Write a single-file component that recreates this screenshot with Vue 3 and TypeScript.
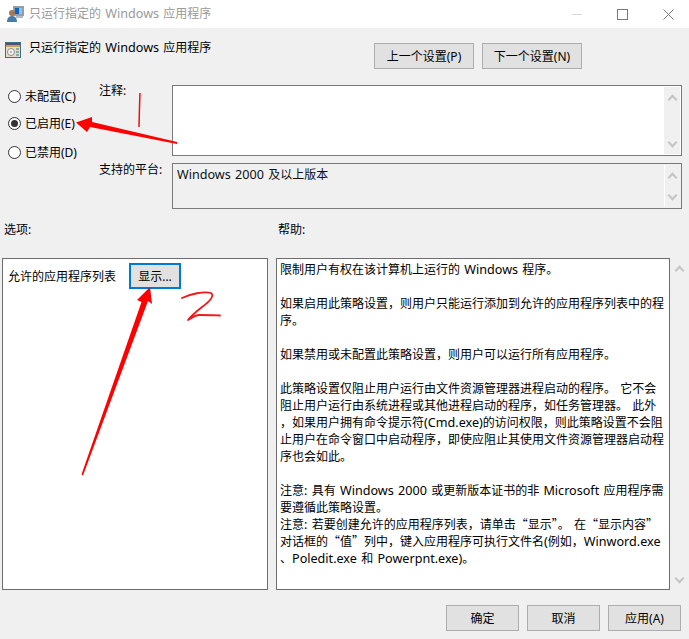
<script setup lang="ts">
interface Seg { text: string; kind: 'lat' | 'cjk' }

function segs(text: string): Seg[] {
  const parts = text.match(/[A-Za-z0-9.:() \-]+|[^A-Za-z0-9.:() \-]+/g) ?? []
  return parts.map((p) => ({ text: p, kind: /^[A-Za-z0-9.:() \-]/.test(p) ? 'lat' : 'cjk' }))
}

const windowTitle = segs('只运行指定的 Windows 应用程序')
const platform = segs('Windows 2000 及以上版本')

const radios = [
  { label: '未配置(C)', checked: false },
  { label: '已启用(E)', checked: true },
  { label: '已禁用(D)', checked: false },
]
const helpLines: Seg[][] = [
  '限制用户有权在该计算机上运行的 Windows 程序。',
  '',
  '如果启用此策略设置，则用户只能运行添加到允许的应用程序列表中的程',
  '序。',
  '',
  '如果禁用或未配置此策略设置，则用户可以运行所有应用程序。',
  '',
  '此策略设置仅阻止用户运行由文件资源管理器进程启动的程序。 它不会',
  '阻止用户运行由系统进程或其他进程启动的程序，如任务管理器。 此外',
  '，如果用户拥有命令提示符(Cmd.exe)的访问权限，则此策略设置不会阻',
  '止用户在命令窗口中启动程序，即使应阻止其使用文件资源管理器启动程',
  '序也会如此。',
  '',
  '注意: 具有 Windows 2000 或更新版本证书的非 Microsoft 应用程序需',
  '要遵循此策略设置。',
  '注意: 若要创建允许的应用程序列表，请单击“显示”。 在“显示内容”',
  '对话框的“值”列中，键入应用程序可执行文件名(例如，Winword.exe',
  '、Poledit.exe 和 Powerpnt.exe)。',
].map(segs)
</script>

<template>
  <div class="window">
    <header class="titlebar">
      <svg class="title-icon" viewBox="0 0 17 16" width="17" height="16">
        <rect x="6.500" y="0.500" width="10" height="9" fill="#8f9aa6" stroke="#9aa0a6" />
        <rect x="8" y="2" width="7" height="6" fill="#0f5fc4" />
        <rect x="12" y="2" width="3" height="6" fill="#8cc4f2" />
        <rect x="9" y="10" width="7" height="2" fill="#b4bac0" />
        <circle cx="5" cy="7" r="3" fill="#a5764f" />
        <path d="M0 16c0-4 2-6 5-6s5 2 5 6z" fill="#4a7aa8" />
      </svg>
      <span class="title-text">
        <span v-for="(s, i) in windowTitle" :key="i" :class="s.kind">{{ s.text }}</span>
      </span>
      <div class="window-controls">
        <span class="ctl-min"></span>
        <span class="ctl-max"></span>
        <svg class="ctl-close" viewBox="0 0 11 11" width="11" height="11">
          <path d="M0.500 0.500L10.500 10.500M10.500 0.500L0.500 10.500" stroke="#7a7a7a" stroke-width="1" fill="none" />
        </svg>
      </div>
    </header>

    <main class="body">
      <section class="head">
        <div class="head-title">
          <svg class="policy-icon" viewBox="0 0 16 16" width="16" height="16">
            <rect x="0.500" y="0.500" width="15" height="15" fill="#e4dfc8" stroke="#3f7278" />
            <rect x="1" y="1" width="14" height="2" fill="#5a4a86" />
            <rect x="1" y="3" width="14" height="2" fill="#c2a850" />
            <circle cx="6" cy="10" r="3.500" fill="#f7f7f7" stroke="#8a8a8a" />
            <circle cx="6" cy="10" r="1" fill="#9a9a9a" />
            <path d="M11 7h3M11 10h3M11 13h3" stroke="#3f7278" stroke-width="1" />
          </svg>
          <span class="head-text">
            <span v-for="(s, i) in windowTitle" :key="i" :class="s.kind">{{ s.text }}</span>
          </span>
        </div>
        <div class="nav-buttons">
          <button class="btn btn-nav">上一个设置(P)</button>
          <button class="btn btn-nav">下一个设置(N)</button>
        </div>
      </section>

      <section class="config">
        <div class="radios">
          <label v-for="r in radios" :key="r.label" class="radio">
            <span class="radio-dot" :class="{ checked: r.checked }"></span>
            <span>{{ r.label }}</span>
          </label>
        </div>
        <div class="fields">
          <div class="field field-note">
            <span class="field-label">注释:</span>
            <div class="box box-note">
              <div class="box-text"></div>
              <div class="scroll">
                <span class="chev up"></span>
                <span class="chev down"></span>
              </div>
            </div>
          </div>
          <div class="field field-platform">
            <span class="field-label">支持的平台:</span>
            <div class="box box-platform">
              <div class="box-text">
                <span v-for="(s, i) in platform" :key="i" :class="s.kind">{{ s.text }}</span>
              </div>
              <div class="scroll scroll-platform">
                <span class="chev up"></span>
                <span class="chev down"></span>
              </div>
            </div>
          </div>
        </div>
      </section>

      <section class="columns-head">
        <span class="col-left">选项:</span>
        <span class="col-right">帮助:</span>
      </section>

      <section class="columns">
        <div class="options">
          <span class="options-label">允许的应用程序列表</span>
          <button class="btn btn-show">显示...</button>
        </div>
        <div class="help">
          <div v-for="(line, li) in helpLines" :key="li" class="help-line">
            <span v-for="(s, i) in line" :key="i" :class="s.kind">{{ s.text }}</span>
          </div>
        </div>
        <div class="help-scroll">
          <span class="chev up"></span>
          <span class="chev down"></span>
        </div>
      </section>

      <footer class="footer">
        <button class="btn btn-foot">确定</button>
        <button class="btn btn-foot">取消</button>
        <button class="btn btn-foot">应用(A)</button>
      </footer>
    </main>

    <svg class="annotations" viewBox="0 0 689 639" width="689" height="639">
      <path d="M177 142L177 144L90 127L87 132L76 122.500L92 117L92 122Z" fill="#fe0000" />
      <path d="M140 93C139.500 105 139.300 115 139 127" stroke="#f01010" stroke-width="1.500" fill="none" />
      <path d="M81.500 474.500L83 475.500L148 301L152 304L150 287L137 300L141.500 302Z" fill="#fe0000" />
      <path d="M182 298C190 294 204 291 211 293C215 296 209 302 202 307C197 311 191 316 188 320C192 318 194 315 199 315C206 315 213 315 220 315.500" stroke="#f01818" stroke-width="1.800" fill="none" stroke-linecap="round" stroke-linejoin="round" />
    </svg>
  </div>
</template>

<style>
html, body { margin: 0; background: #f0f0f0; }
</style>

<style scoped>
.window {
  position: relative;
  width: 689px;
  height: 639px;
  display: flex;
  flex-direction: column;
  overflow: hidden;
  background: #f0f0f0;
  color: #000;
  font-family: "Noto Sans", "Noto Sans CJK SC", sans-serif;
  font-size: 12px;
  line-height: 17px;
}
.cjk { font-family: "Noto Sans CJK SC", "Noto Sans", sans-serif; line-height: 1; }
.lat {
  font-family: "Noto Sans", "Noto Sans CJK SC", sans-serif;
  font-size: 12.600px;
  word-spacing: 1px;
  line-height: 1;
}
.titlebar {
  height: 28px;
  flex: none;
  display: flex;
  align-items: center;
  padding-left: 7px;
  background: #fff;
}
.title-icon { margin-right: 5px; }
.title-text { color: #9a9a9a; margin-top: -1px; }
.window-controls {
  margin-left: auto;
  display: flex;
  align-items: center;
  padding-right: 15px;
  gap: 35px;
}
.ctl-min { width: 10px; height: 1px; background: #d8d8d8; }
.ctl-max { width: 9px; height: 9px; border: 1px solid #7a7a7a; }
.ctl-close { display: block; }
.body {
  flex: 1;
  display: flex;
  flex-direction: column;
  min-height: 0;
}
.head {
  height: 57px;
  flex: none;
  display: flex;
  justify-content: space-between;
  padding: 15px 107px 0 5px;
  box-sizing: border-box;
}
.head-title {
  display: flex;
  align-items: flex-start;
  gap: 8px;
  height: 26px;
}
.policy-icon { margin-top: -1px; }
.head-text { margin-top: -4px; }
.nav-buttons { display: flex; gap: 8px; }
.btn {
  font: inherit;
  color: #000;
  padding: 0;
  background: #e1e1e1;
  border: 1px solid #adadad;
  box-sizing: border-box;
}
.btn-nav { width: 100px; height: 26px; }
.config { display: flex; height: 124px; flex: none; }
.radios {
  width: 99px;
  flex: none;
  display: flex;
  flex-direction: column;
  padding: 3px 0 0 8px;
  box-sizing: border-box;
  gap: 10px;
}
.radio { display: flex; align-items: center; gap: 4px; height: 17px; }
.radio:last-child { margin-top: 2px; }
.radio-dot {
  width: 13px;
  height: 13px;
  box-sizing: border-box;
  border: 1px solid #333;
  border-radius: 50%;
  background: #fff;
  position: relative;
}
.radio-dot.checked::after {
  content: "";
  position: absolute;
  left: 2px;
  top: 2px;
  width: 7px;
  height: 7px;
  border-radius: 50%;
  background: #333;
}
.fields { flex: 1; display: flex; flex-direction: column; gap: 7px; padding-right: 7px; }
.field { display: flex; }
.field-label { width: 73px; flex: none; }
.field-note .field-label { margin-top: -3px; }
.field-platform .field-label { margin-top: -2px; }
.box {
  flex: 1;
  display: flex;
  border: 1px solid #7a7a7a;
  box-sizing: border-box;
}
.box-note { height: 71px; background: #fff; }
.box-platform { height: 46px; background: #f0f0f0; }
.box-text { flex: 1; padding: 2px 4px; color: #111; }
.scroll {
  width: 16px;
  margin: 1px;
  display: flex;
  flex-direction: column;
  justify-content: space-between;
  align-items: center;
  background: #f0f0f0;
  padding: 6px 0 5px;
  box-sizing: border-box;
}
.scroll-platform { border-left: 1px solid #fff; }
.chev {
  width: 5px;
  height: 5px;
  border-left: 2px solid #c4c4c4;
  border-top: 2px solid #c4c4c4;
  display: block;
}
.chev.up { transform: rotate(45deg); margin-top: 3px; }
.chev.down { transform: rotate(225deg); margin-bottom: 3px; }
.columns-head {
  display: flex;
  height: 49px;
  flex: none;
  padding-top: 12px;
  box-sizing: border-box;
}
.col-left { width: 278px; padding-left: 4px; box-sizing: border-box; }
.columns {
  display: flex;
  height: 332px;
  flex: none;
  padding-left: 2px;
}
.options {
  width: 266px;
  flex: none;
  box-sizing: border-box;
  border: 1px solid #6e6e6e;
  background: #fff;
  display: flex;
  align-items: flex-start;
  padding: 4px 0 0 5px;
  gap: 13px;
}
.options-label { margin-top: 5px; }
.btn-show {
  width: 52px;
  height: 26px;
  border: 2px solid #0078d7;
}
.help {
  width: 394px;
  margin-left: 8px;
  flex: none;
  box-sizing: border-box;
  border: 1px solid #6e6e6e;
  background: #fff;
  padding: 2px 3px;
  overflow: hidden;
}
.help-line { height: 17px; white-space: nowrap; }
.help-scroll {
  width: 20px;
  display: flex;
  flex-direction: column;
  justify-content: space-between;
  align-items: center;
  padding: 6px 0 5px;
  box-sizing: border-box;
}
.footer {
  display: flex;
  justify-content: flex-end;
  gap: 8px;
  padding: 15px 8px 0 0;
}
.btn-foot { width: 73px; height: 26px; }
.annotations {
  position: absolute;
  left: 0;
  top: 0;
  pointer-events: none;
}
</style>
